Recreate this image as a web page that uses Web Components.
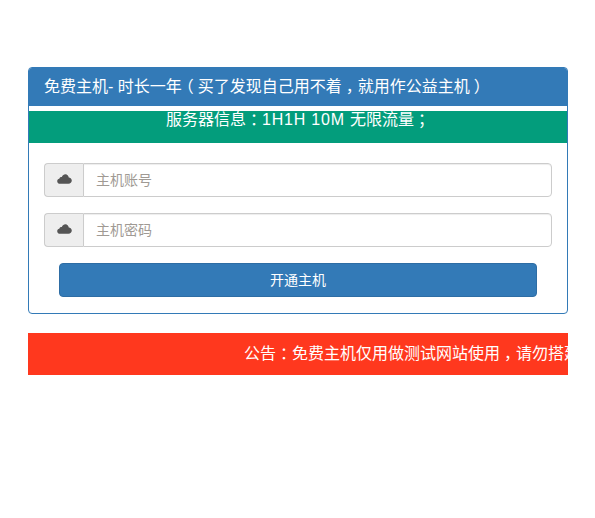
<!DOCTYPE html>
<html lang="zh-CN">
<head>
<meta charset="utf-8">
<style>
    html, body { margin: 0; background: #fff; }
    body {
        height: 518px;
        overflow: hidden;
        padding: 67px 27px 0 28px;
        box-sizing: border-box;
        font-family: "Liberation Sans", "Noto Sans CJK SC", sans-serif;
        font-size: 14px;
        color: #333;
    }
</style>
</head>
<body>
<host-panel>
    <span slot="title">免费主机- 时长一年<cn-punct>（</cn-punct>买了发现自己用不着<cn-punct>，</cn-punct>就用作公益主机<cn-punct>）</cn-punct></span>
    <span slot="info">服务器信息<cn-punct>：</cn-punct><wide-latin>1H1H 10M </wide-latin>无限流量<cn-punct>；</cn-punct></span>
    <cloud-input placeholder="主机账号"></cloud-input>
    <cloud-input placeholder="主机密码"></cloud-input>
    <open-button>开通主机</open-button>
</host-panel>
<notice-bar>公告<cn-punct>：</cn-punct>免费主机仅用做测试网站使用<cn-punct>，</cn-punct>请勿搭建</notice-bar>

<script>
/*
 * PUNCTUATION, centred in its cell: half width glyph with a quarter em each side
 * no whitespace in these two templates, the hosts are inline
 */
class CnPunct extends HTMLElement {
    constructor() {
        super()
        this.attachShadow({ mode: 'open' })
        this.shadowRoot.innerHTML = `<style>
    :host { font-feature-settings: "halt"; margin: 0 .25em; }
</style><slot></slot>`
    }
}
customElements.define('cn-punct', CnPunct)

class WideLatin extends HTMLElement {
    constructor() {
        super()
        this.attachShadow({ mode: 'open' })
        this.shadowRoot.innerHTML = `<style>
    :host { letter-spacing: .8px; }
</style><slot></slot>`
    }
}
customElements.define('wide-latin', WideLatin)

/*
 * PANEL
 */
class HostPanel extends HTMLElement {
    constructor() {
        super()
        this.attachShadow({ mode: 'open' })
        this.shadowRoot.innerHTML = `
<style>
    :host {
        display: block;
        width: 540px;
        height: 247px;
        box-sizing: border-box;
        border: 1px solid #337ab7;
        border-radius: 4px;
        overflow: hidden;
    }
    .title {
        height: 38px;
        box-sizing: border-box;
        padding: 10px 15px 0;
        background: #337ab7;
        color: #fff;
        font-size: 16px;
        line-height: 18px;
    }
    .info {
        height: 32px;
        margin-top: 5px;
        background: #039d7c;
        color: #fff;
        font-size: 16px;
        line-height: 18px;
        text-align: center;
    }
    .body {
        display: flex;
        flex-direction: column;
        gap: 16px;
        padding: 20px 15px 0;
    }
</style>
<div class="title"><slot name="title"></slot></div>
<div class="info"><slot name="info"></slot></div>
<div class="body"><slot></slot></div>
`
    }
}
customElements.define('host-panel', HostPanel)

/*
 * INPUT GROUP
 */
class CloudInput extends HTMLElement {
    constructor() {
        super()
        this.attachShadow({ mode: 'open' })
        this.shadowRoot.innerHTML = `
<style>
    :host {
        display: flex;
        height: 34px;
        font-size: 14px;
    }
    .addon {
        flex: none;
        width: 39px;
        box-sizing: border-box;
        display: flex;
        align-items: center;
        justify-content: center;
        padding-bottom: 3px;
        background: #eee;
        border: 1px solid #ccc;
        border-right: 0;
        border-radius: 4px 0 0 4px;
    }
    input {
        flex: 1;
        min-width: 0;
        margin: 0;
        padding: 6px 12px;
        box-sizing: border-box;
        border: 1px solid #ccc;
        border-radius: 0 4px 4px 0;
        box-shadow: inset 0 1px 1px rgba(0,0,0,.075);
        font: inherit;
        color: #555;
        outline: 0;
    }
    input::placeholder { color: #a09a94; opacity: 1; }
    svg { display: block; }
</style>
<span class="addon">
    <svg width="15" height="10" viewBox="0 0 15 10">
        <path fill="#555" d="M3 9.8C1.3 9.8 0.2 8.7 0.2 7.2 0.2 5.9 1.1 4.9 2.3 4.7 2.6 3.5 3.6 2.8 4.8 3 5.6 1.2 6.9 0.2 8.4 0.2 10.2 0.2 11.5 1.5 11.8 3.4 13.5 3.6 14.8 4.9 14.8 6.6 14.8 8.5 13.3 9.8 11.5 9.8Z"/>
    </svg>
</span>
<input type="text">
`
        this.shadowRoot.querySelector('input').placeholder = this.getAttribute('placeholder') || ''
    }
}
customElements.define('cloud-input', CloudInput)

/*
 * BUTTON
 */
class OpenButton extends HTMLElement {
    constructor() {
        super()
        this.attachShadow({ mode: 'open' })
        this.shadowRoot.innerHTML = `
<style>
    :host {
        display: block;
        margin: 0 15px;
    }
    button {
        display: block;
        width: 100%;
        height: 34px;
        padding: 0 0 2px;
        box-sizing: border-box;
        background: #337ab7;
        border: 1px solid #2e6da4;
        border-radius: 4px;
        color: #fff;
        font: inherit;
        font-size: 14px;
    }
</style>
<button type="button"><slot></slot></button>
`
    }
}
customElements.define('open-button', OpenButton)

/*
 * NOTICE
 */
class NoticeBar extends HTMLElement {
    constructor() {
        super()
        this.attachShadow({ mode: 'open' })
        this.shadowRoot.innerHTML = `
<style>
    :host {
        display: block;
        width: 540px;
        height: 42px;
        margin-top: 19px;
        padding-left: 216px;
        box-sizing: border-box;
        overflow: hidden;
        background: #ff381e;
        color: #fff;
        font-size: 16px;
        line-height: 41px;
        white-space: nowrap;
    }
</style>
<slot></slot>
`
    }
}
customElements.define('notice-bar', NoticeBar)
</script>
</body>
</html>
